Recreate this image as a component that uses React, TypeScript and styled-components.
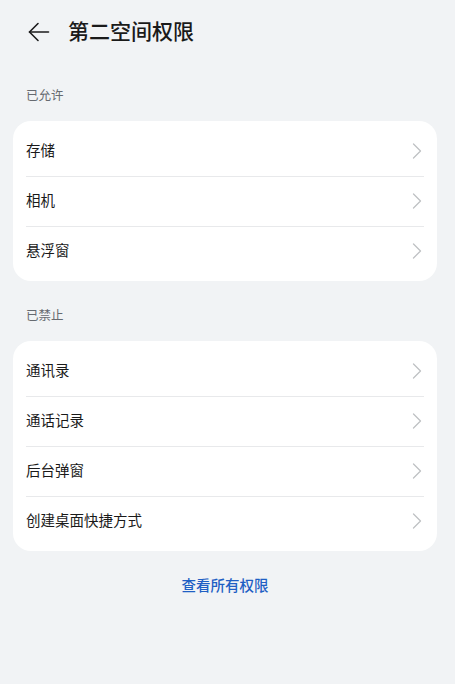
import styled, { createGlobalStyle } from 'styled-components'

const GlobalStyle = createGlobalStyle`
  html, body {
    margin: 0;
    padding: 0;
    background: #f1f3f5;
  }
  body {
    font-family: 'Noto Sans CJK SC', 'Noto Sans', sans-serif;
    -webkit-font-smoothing: antialiased;
  }
`

const Page = styled.div`
  min-height: 684px;
  padding: 0 18px 0 13px;
  box-sizing: border-box;
  background: #f1f3f5;
`

const Header = styled.header`
  height: 64px;
  display: flex;
  align-items: center;
  padding-left: 15px;
  gap: 18px;
`

const BackBtn = styled.button`
  display: flex;
  padding: 0;
  border: 0;
  background: none;
  color: #1c1c1c;
  cursor: pointer;
`

const Title = styled.h1`
  margin: 0 0 4px;
  font-size: 21px;
  font-weight: 500;
  color: #1a1a1a;
  letter-spacing: 0;
`

const SectionLabel = styled.div<{ $first?: boolean }>`
  padding: ${({ $first }) => ($first ? '21px' : '24px')} 13px 16px;
  font-size: 12.5px;
  line-height: 20px;
  color: #666a70;
`

const Card = styled.div`
  background: #fff;
  border-radius: 18px;
  padding: 5px 0;
`

const Row = styled.div`
  height: 50px;
  display: flex;
  align-items: center;
  justify-content: space-between;
  padding: 0 14px 0 13px;
  position: relative;
  cursor: pointer;

  & + &::before {
    content: '';
    position: absolute;
    top: 0;
    left: 13px;
    right: 13px;
    height: 1px;
    background: #e8e9eb;
  }
`

const RowText = styled.span`
  font-size: 14.5px;
  line-height: 20px;
  margin-top: -2px;
  color: #1a1a1a;
`

const Chevron = styled.svg`
  width: 12px;
  height: 18px;
  color: #bfc1c4;
  flex-shrink: 0;
`

const LinkWrap = styled.div`
  display: flex;
  justify-content: center;
  margin-top: 24px;
`

const Link = styled.a`
  font-size: 14.5px;
  line-height: 20px;
  color: #1f5fc4;
  font-weight: 500;
  text-decoration: none;
  cursor: pointer;
`

const allowed = ['存储', '相机', '悬浮窗']
const denied = ['通讯录', '通话记录', '后台弹窗', '创建桌面快捷方式']

function ArrowLeft() {
  return (
    <svg width="22" height="20" viewBox="0 0 22 20" fill="none" stroke="currentColor" strokeWidth="1.6" strokeLinecap="round" strokeLinejoin="round">
      <path d="M1.5 10H20.5" />
      <path d="M10 1.5L1.5 10L10 18.5" />
    </svg>
  )
}

function PermissionCard({ items }: { items: string[] }) {
  return (
    <Card>
      {items.map((name) => (
        <Row key={name}>
          <RowText>{name}</RowText>
          <Chevron viewBox="0 0 12 18" fill="none" stroke="currentColor" strokeWidth="1.3" strokeLinecap="round" strokeLinejoin="round">
            <path d="M2.5 2L9.5 9L2.5 16" />
          </Chevron>
        </Row>
      ))}
    </Card>
  )
}

export default function App() {
  return (
    <>
      <GlobalStyle />
      <Page>
        <Header>
          <BackBtn aria-label="返回"><ArrowLeft /></BackBtn>
          <Title>第二空间权限</Title>
        </Header>

        <SectionLabel $first>已允许</SectionLabel>
        <PermissionCard items={allowed} />

        <SectionLabel>已禁止</SectionLabel>
        <PermissionCard items={denied} />

        <LinkWrap>
          <Link>查看所有权限</Link>
        </LinkWrap>
      </Page>
    </>
  )
}
